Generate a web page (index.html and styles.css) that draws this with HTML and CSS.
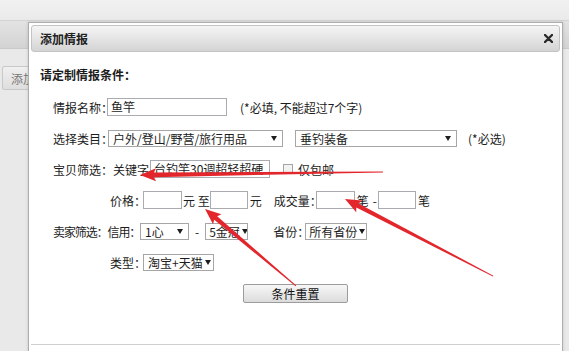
FILE: index.html
```html
<!DOCTYPE html>
<html lang="zh-CN">
<head>
<meta charset="utf-8">
<title>添加情报</title>
<link rel="stylesheet" href="styles.css">
</head>
<body>
<div class="page">
  <div class="topbar"></div>
  <div class="band"></div>
  <div class="toolbar"><span class="addbtn">添加</span></div>
</div>

<div class="dialog">
  <div class="dlg-head">
    <span class="dlg-title">添加情报</span>
    <svg class="dlg-close" width="9" height="9" viewBox="0 0 9 9"><path d="M1 1L8 8M8 1L1 8" stroke="#2a2a2a" stroke-width="2.4" stroke-linecap="round"/></svg>
  </div>
  <div class="dlg-body">
    <div class="sect-title">请定制情报条件：</div>
    <div class="rows">
      <div class="row">
        <span class="lbl w54">情报名称：</span>
        <span class="input w120">鱼竿</span>
        <span class="hint">(*必填, 不能超过7个字)</span>
      </div>
      <div class="row">
        <span class="lbl w55">选择类目：</span>
        <span class="select w175"><span class="sel-text">户外/登山/野营/旅行用品</span><i class="caret"></i></span>
        <span class="select w162 ml12"><span class="sel-text">垂钓装备</span><i class="caret"></i></span>
        <span class="hint ml11">(*必选)</span>
      </div>
      <div class="row">
        <span class="lbl w97">宝贝筛选：关键字</span>
        <span class="input w120">台钓竿30调超轻超硬</span>
        <span class="checkbox"></span>
        <span class="cb-label">仅包邮</span>
      </div>
      <div class="row indent">
        <span class="lbl w33">价格：</span>
        <span class="input w39"></span>
        <span class="txt ml1">元 至</span>
        <span class="input w38"></span>
        <span class="txt ml2">元</span>
        <span class="lbl w42 ml12">成交量：</span>
        <span class="input w39"></span>
        <span class="txt ml2">笔</span>
        <span class="txt ml4">-</span>
        <span class="input w38 ml1"></span>
        <span class="txt ml2">笔</span>
      </div>
      <div class="row">
        <span class="lbl w87 condensed">卖家筛选：信用：</span>
        <span class="select w49"><span class="sel-text">1心</span><i class="caret"></i></span>
        <span class="txt dash">-</span>
        <span class="select w43 tight"><span class="sel-text">5金冠</span><i class="caret"></i></span>
        <span class="lbl w32 ml25">省份：</span>
        <span class="select w62 tight"><span class="sel-text">所有省份</span><i class="caret"></i></span>
      </div>
      <div class="row indent">
        <span class="lbl w33">类型：</span>
        <span class="select w71"><span class="sel-text">淘宝+天猫</span><i class="caret"></i></span>
      </div>
      <div class="row btn-row">
        <span class="reset-btn">条件重置</span>
      </div>
    </div>
  </div>
  <div class="dlg-foot"></div>
</div>

<svg class="arrows" width="569" height="351" viewBox="0 0 569 351">
  <g transform="translate(140 175) rotate(-0.7)">
    <polygon class="arrow" points="0,0 16,-6.5 14,-2.3 243,-0.5 243,0.5 14,2.3 16,6.5"/>
  </g>
  <g transform="translate(345 199) rotate(27.5)">
    <polygon class="arrow" points="0,0 16,-6.5 14,-2.3 167,-0.5 167,0.5 14,2.3 16,6.5"/>
  </g>
  <g transform="translate(205 209) rotate(40.2)">
    <polygon class="arrow" points="0,0 16,-6.5 14,-2.3 119,-0.5 119,0.5 14,2.3 16,6.5"/>
  </g>
</svg>
</body>
</html>
```

FILE: styles.css
```css
html, body {
  margin: 0;
  padding: 0;
}
body {
  width: 569px;
  height: 351px;
  overflow: hidden;
  position: relative;
  background: #e9e9e9;
  font-family: "Noto Sans CJK SC", "Liberation Sans", sans-serif;
  font-size: 12px;
  color: #1c1c1c;
}

/* background page */
.topbar {
  height: 20px;
  background: linear-gradient(#f1f1f1, #eaeaea);
  border-bottom: 1px solid #d4d4d4;
}
.band {
  height: 27px;
  background: linear-gradient(#e3e3e3, #d3d3d3);
  border-bottom: 1px solid #c9c9c9;
}
.toolbar {
  padding: 17px 0 0 2px;
}
.addbtn {
  display: inline-flex;
  align-items: center;
  width: 50px;
  height: 24px;
  padding: 0 8px;
  box-sizing: border-box;
  border: 1px solid #c8c8c8;
  border-radius: 2px;
  background: linear-gradient(#f0f0f0, #dedede);
  color: #777;
}

/* dialog */
.dialog {
  position: absolute;
  left: 28px;
  top: 22px;
  width: 535px;
  height: 345px;
  box-sizing: border-box;
  padding: 2px;
  border: 1px solid #adadad;
  background: #fff;
  box-shadow: 0 0 3px rgba(0, 0, 0, 0.15);
}
.dlg-head {
  height: 27px;
  box-sizing: border-box;
  display: flex;
  align-items: center;
  justify-content: space-between;
  padding: 0 6px 0 8px;
  border: 1px solid #c3c3c3;
  border-radius: 3px;
  background: linear-gradient(#f5f5f5, #d4d4d4);
}
.dlg-title {
  font-weight: bold;
  color: #222;
}
.dlg-close {
  display: block;
}
.dlg-body {
  height: 292px;
  padding-top: 15px;
  box-sizing: border-box;
}
.dlg-foot {
  border-top: 1px solid #cfcfcf;
}
.sect-title {
  font-weight: bold;
  line-height: 16px;
  padding-left: 9px;
}
.rows {
  margin-top: 15px;
  padding-left: 22px;
  display: flex;
  flex-direction: column;
  gap: 13px;
}
.row {
  height: 18px;
  display: flex;
  align-items: center;
  white-space: nowrap;
}
.row.indent {
  padding-left: 57px;
}
.lbl {
  flex: none;
}
.lbl.condensed {
  letter-spacing: -1.1px;
}
.w32 { width: 32px; }
.w33 { width: 33px; }
.w42 { width: 42px; }
.w54 { width: 54px; }
.w55 { width: 55px; }
.w87 { width: 87px; }
.w97 { width: 97px; }

.ml1 { margin-left: 1px; }
.ml2 { margin-left: 2px; }
.ml4 { margin-left: 4px; }
.ml11 { margin-left: 11px; }
.ml12 { margin-left: 12px; }
.ml25 { margin-left: 25px; }

.input {
  flex: none;
  height: 18px;
  box-sizing: border-box;
  border: 1px solid #a9abb0;
  background: #fff;
  padding: 0 3px;
  line-height: 16px;
  overflow: hidden;
}
.w38 { width: 38px; }
.w39 { width: 39px; }
.w120 { width: 120px; }

.hint {
  margin-left: 13px;
}
.row .hint.ml11 { margin-left: 11px; }

.select {
  flex: none;
  height: 17px;
  box-sizing: border-box;
  border: 1px solid #a6a6a6;
  background: #fff;
  display: flex;
  align-items: center;
  justify-content: space-between;
  padding: 0 5px 0 4px;
  line-height: 15px;
  overflow: hidden;
}
.select.tight {
  padding: 0 3px 0 3px;
}
.w43 { width: 43px; }
.w49 { width: 49px; }
.w62 { width: 62px; }
.w71 { width: 71px; }
.w162 { width: 162px; }
.w175 { width: 175px; }
.caret {
  flex: none;
  width: 0;
  height: 0;
  border-left: 3px solid transparent;
  border-right: 3px solid transparent;
  border-top: 5px solid #1e1e1e;
  margin-left: 2px;
}
.dash {
  margin: 0 6px;
}

.checkbox {
  flex: none;
  width: 10px;
  height: 10px;
  box-sizing: border-box;
  border: 1px solid #a5a5a5;
  background: #f2f2f2;
  margin-left: 13px;
}
.cb-label {
  margin-left: 5px;
}

.btn-row {
  height: 19px;
  padding-left: 190px;
}
.reset-btn {
  width: 105px;
  height: 19px;
  box-sizing: border-box;
  display: flex;
  align-items: center;
  justify-content: center;
  border: 1px solid #9c9c9c;
  border-radius: 2px;
  background: linear-gradient(#f7f7f7, #dcdcdc);
  color: #111;
}

/* annotation arrows drawn over the screenshot */
.arrows {
  position: absolute;
  left: 0;
  top: 0;
  pointer-events: none;
}
.arrow {
  fill: #e3262b;
}
```
